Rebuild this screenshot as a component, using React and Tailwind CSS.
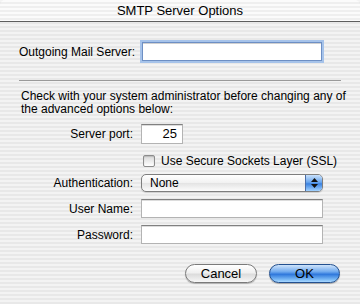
import React from "react";

function TextField({ className = "", value = "", right = false }) {
  return (
    <div
      className={`h-[19px] bg-white border border-[#b3b3b3] border-t-[#808080] shadow-[inset_0_1px_0_#dcdcdc] flex items-center px-[5px] text-[13px] ${right ? "justify-end" : ""} ${className}`}
    >
      {value}
    </div>
  );
}

function Row({ label, children, className = "" }) {
  return (
    <div className={`flex items-center ${className}`}>
      <div className="w-[114px] text-right whitespace-nowrap">{label}</div>
      <div className="ml-[8px] flex-1 flex items-center">{children}</div>
    </div>
  );
}

export default function App() {
  return (
    <div
      className="w-[360px] h-[304px] overflow-hidden text-[12px] leading-[14px] text-black bg-[repeating-linear-gradient(180deg,#f3f3f3_0px,#f3f3f3_2px,#e8e8e8_2px,#e8e8e8_4px)]"
      style={{ fontFamily: '"Liberation Sans", Arial, sans-serif' }}
    >
      {/* title bar */}
      <div className="h-[22px] rounded-t-[5px] border-b border-[#5e5e5e] flex items-center justify-center text-[13px] pt-[1px] bg-[repeating-linear-gradient(180deg,#fbfbfb_0px,#fbfbfb_2px,#efefef_2px,#efefef_4px)]">
        SMTP Server Options
      </div>

      <div className="px-[19px]">
        <Row label="Outgoing Mail Server:" className="mt-[20px]">
          <div className="ml-[1px] w-[180px] h-[19px] bg-white border border-[#6d8fc4] shadow-[0_0_0_2px_#a6c3ea,inset_0_1px_0_#d0d0d0]" />
        </Row>

        <div className="mt-[19px] h-px bg-[#9a9a9a]" />

        <p className="mt-[9px] pl-[2px] leading-[13px] whitespace-nowrap">
          Check with your system administrator before changing any of
          <br />
          the advanced options below:
        </p>

        <Row label="Server port:" className="mt-[8px]">
          <TextField className="w-[42px] h-[20px]" value="25" right />
        </Row>

        <Row label="" className="mt-[10px]">
          <div className="ml-[2px] w-[12px] h-[12px] rounded-[2px] border border-[#8c8c8c] bg-[linear-gradient(180deg,#d8d8d8,#ffffff)] shadow-[inset_0_1px_1px_#bbbbbb]" />
          <span className="ml-[6px] whitespace-nowrap">Use Secure Sockets Layer (SSL)</span>
        </Row>

        <Row label="Authentication:" className="mt-[6px]">
          <div className="w-[182px] h-[18px] rounded-[5px] border border-[#7e7e7e] flex overflow-hidden bg-[linear-gradient(180deg,#ffffff_0%,#f1f1f1_50%,#e3e3e3_51%,#fcfcfc_100%)] shadow-[0_1px_1px_rgba(0,0,0,0.15)]">
            <div className="flex-1 pl-[8px] flex items-center">None</div>
            <div className="w-[17px] border-l border-[#4a6ea8] flex flex-col items-center justify-center gap-[2px] bg-[linear-gradient(180deg,#c9e1fb_0%,#6aa6ee_45%,#3b82e0_55%,#a2d2ff_100%)]">
              <svg width="7" height="4" viewBox="0 0 7 4"><path d="M3.5 0L7 4H0z" fill="#111" /></svg>
              <svg width="7" height="4" viewBox="0 0 7 4"><path d="M0 0h7L3.5 4z" fill="#111" /></svg>
            </div>
          </div>
        </Row>

        <Row label="User Name:" className="mt-[7px]">
          <TextField className="w-[182px]" />
        </Row>

        <Row label="Password:" className="mt-[7px]">
          <TextField className="w-[182px]" />
        </Row>

        <div className="mt-[20px] flex justify-end gap-[12px] pr-[1px] text-[13px]">
          <button className="w-[72px] h-[19px] rounded-full border border-[#7a7a7a] bg-[linear-gradient(180deg,#ffffff_0%,#f0f0f0_45%,#dcdcdc_55%,#f7f7f7_100%)] shadow-[0_1px_1px_rgba(0,0,0,0.25)] flex items-center justify-center">
            Cancel
          </button>
          <button className="w-[71px] h-[19px] rounded-full border border-[#23508f] bg-[linear-gradient(180deg,#cfe4fb_0%,#6fa9ee_40%,#2f78dc_55%,#7ab9f5_85%,#a9d8ff_100%)] shadow-[0_1px_1px_rgba(0,0,0,0.3)] flex items-center justify-center">
            OK
          </button>
        </div>
      </div>
    </div>
  );
}
